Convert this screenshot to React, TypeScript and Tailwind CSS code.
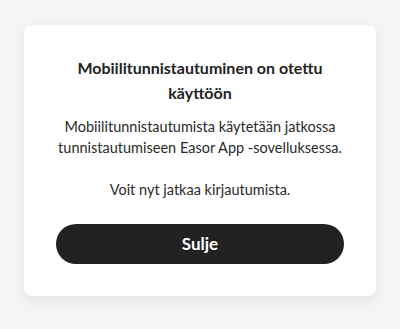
import React from "react";

export default function App() {
  return (
    <div
      className="w-[400px] h-[329px] bg-[#f5f5f4] pt-[25px] px-[24px]"
      style={{ fontFamily: "Lato, 'Noto Sans', sans-serif" }}
    >
      <div className="bg-white rounded-[8px] shadow-[0_4px_14px_rgba(0,0,0,0.08)] px-[32px] pt-[30px] pb-[32px] flex flex-col items-center text-center text-[#222]">
        <h1 className="text-[16px] font-bold leading-[25px] px-[6px]">
          Mobiilitunnistautuminen on otettu käyttöön
        </h1>
        <p className="mt-[11px] text-[14.5px] leading-[21px] text-[#2a2a2a]">
          Mobiilitunnistautumista käytetään jatkossa tunnistautumiseen Easor App -sovelluksessa.
        </p>
        <p className="mt-[21px] text-[14.5px] leading-[21px] text-[#2a2a2a]">
          Voit nyt jatkaa kirjautumista.
        </p>
        <button className="mt-[24px] w-full h-[40px] rounded-full bg-[#222222] text-white text-[17px] font-bold">
          Sulje
        </button>
      </div>
    </div>
  );
}
